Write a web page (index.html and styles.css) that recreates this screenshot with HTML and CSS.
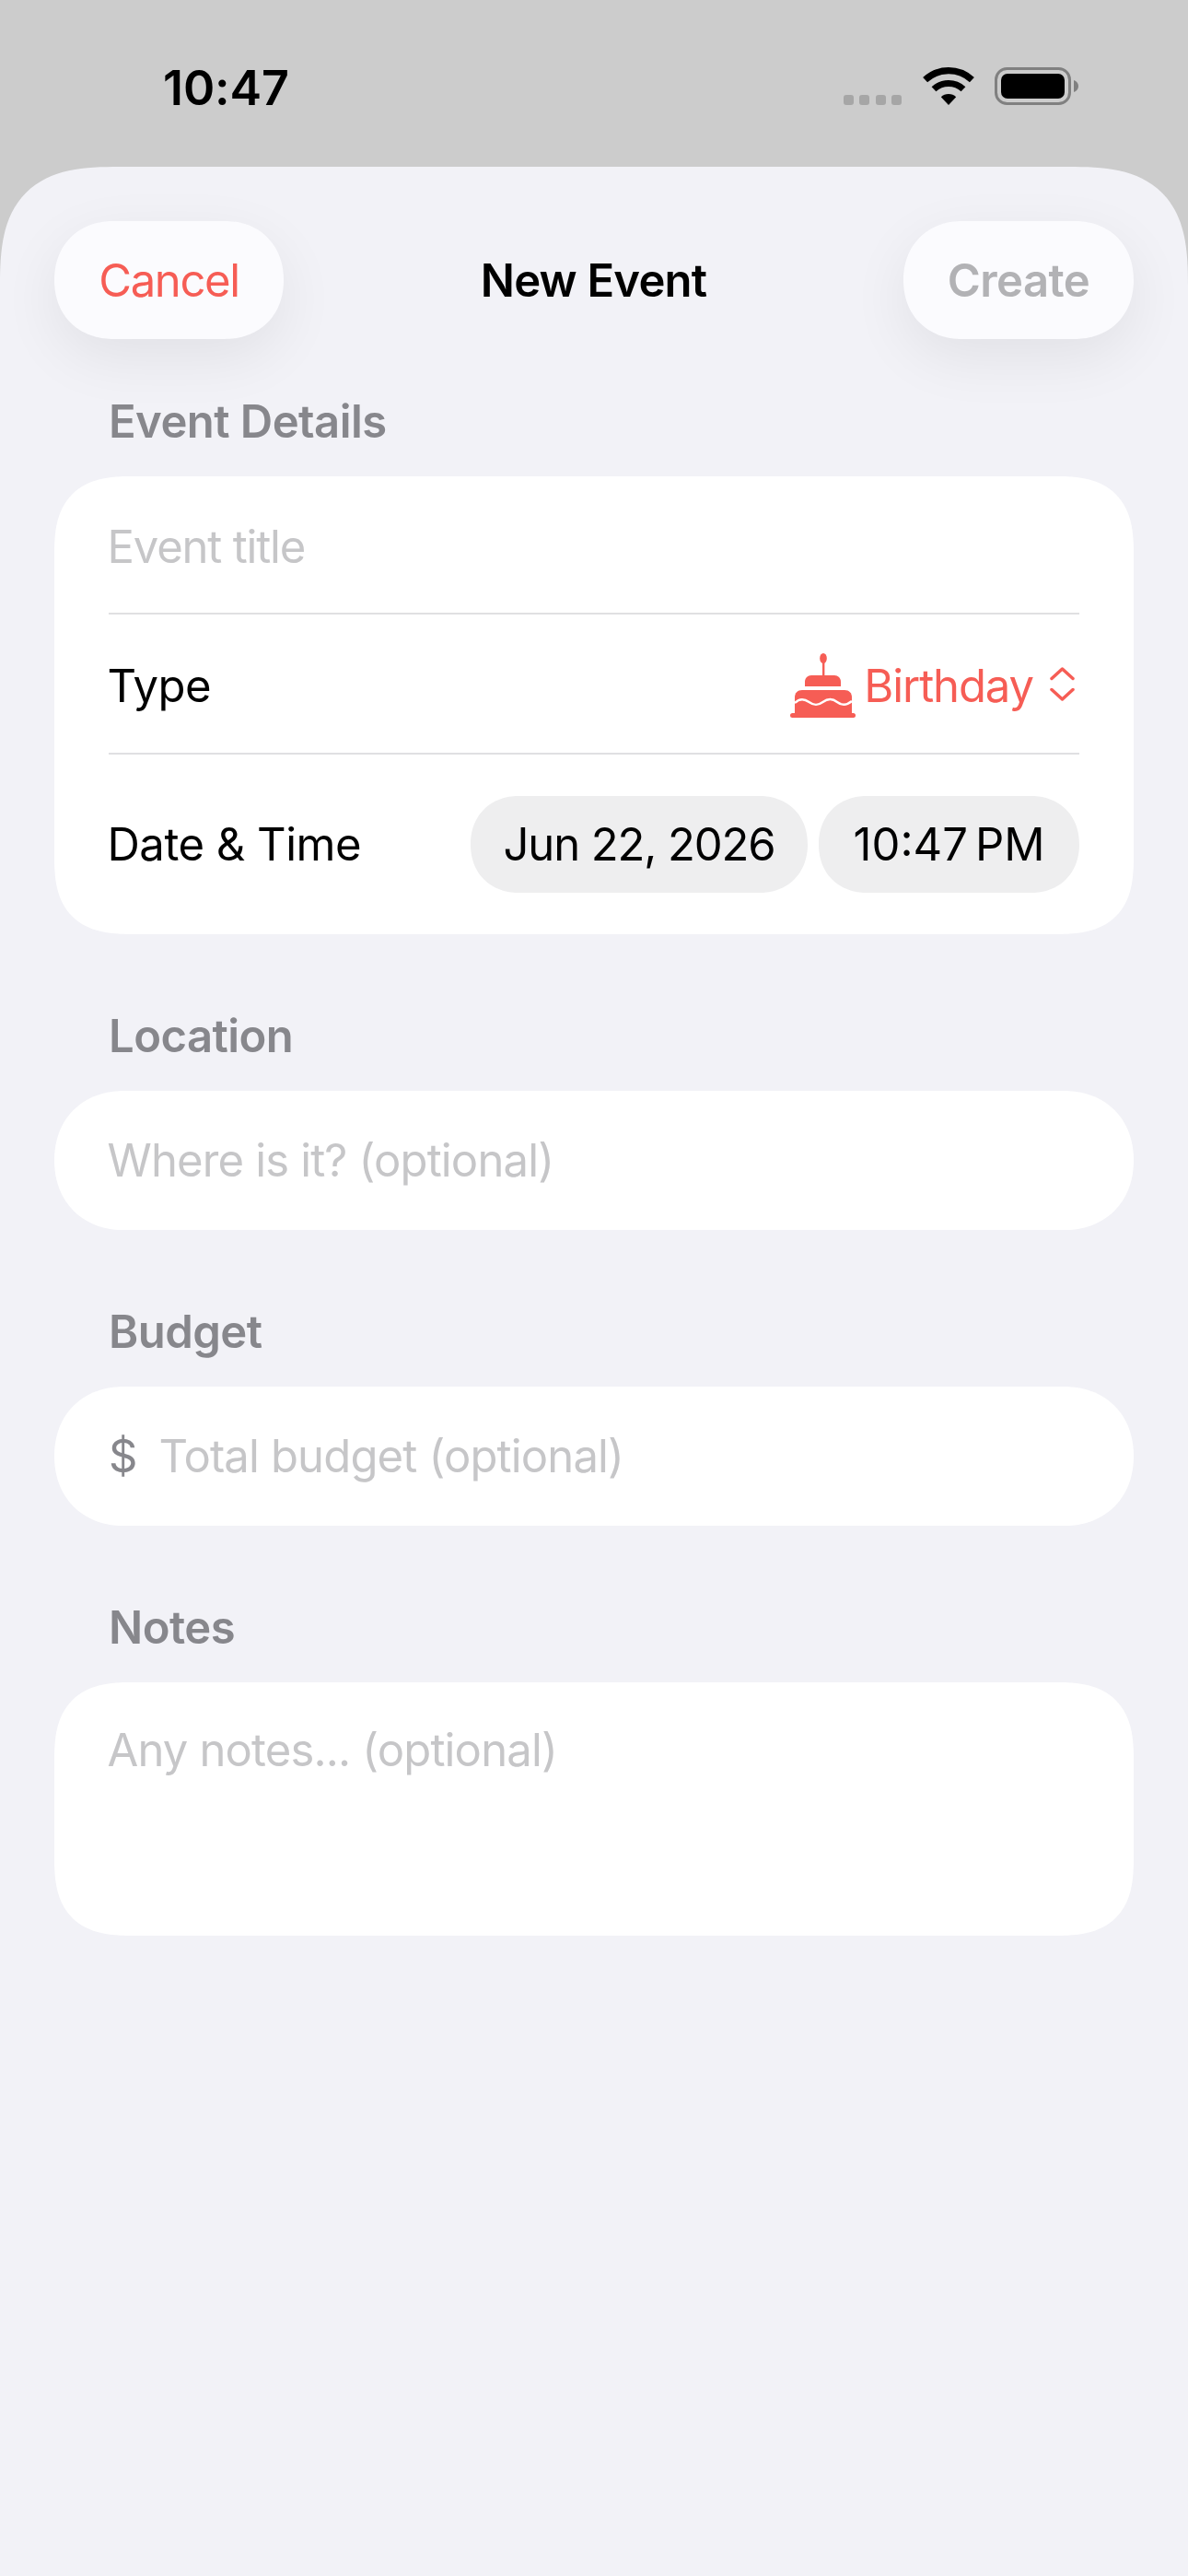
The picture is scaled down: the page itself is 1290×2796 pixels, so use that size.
FILE: index.html
```html
<!DOCTYPE html>
<html lang="en">
<head>
  <meta charset="UTF-8">
  <meta name="viewport" content="width=device-width, initial-scale=1.0">
  <title>New Event</title>
  <link rel="stylesheet" href="styles.css">
</head>
<body>
  <header class="status-bar">
    <span class="clock">10:47</span>
    <div class="status-icons">
      <div class="signal"><i></i><i></i><i></i><i></i></div>
      <svg class="wifi" width="56" height="41" viewBox="0 0 56 41">
        <path d="M2.6 13.7A37.3 37.3 0 0 1 53.4 13.7" fill="none" stroke="#000" stroke-width="7.3"/>
        <path d="M12 23.8A23.5 23.5 0 0 1 44 23.8" fill="none" stroke="#000" stroke-width="7"/>
        <path d="M28 41L19.8 32.2A12 12 0 0 1 36.2 32.2Z" fill="#000"/>
      </svg>
      <svg class="battery" width="91" height="41" viewBox="0 0 91 41">
        <rect x="1.5" y="1.5" width="80" height="38" rx="12" fill="none" stroke="#808080" stroke-width="3"/>
        <rect x="7" y="7" width="69" height="27" rx="7" fill="#000"/>
        <path d="M86 14C89 15 91 17.500 91 20.500C91 23.500 89 26 86 27Z" fill="#808080"/>
      </svg>
    </div>
  </header>

  <main class="sheet">
    <div class="toolbar">
      <button class="pill-button cancel">Cancel</button>
      <h1>New Event</h1>
      <button class="pill-button create">Create</button>
    </div>

    <h2 class="section-label first">Event Details</h2>
    <section class="card details">
      <div class="row row-title"><span class="placeholder">Event title</span></div>
      <div class="row row-type">
        <span class="row-name">Type</span>
        <div class="type-value">
          <svg class="cake" width="71" height="70" viewBox="0 0 71 70">
            <ellipse cx="36" cy="5.500" rx="3.800" ry="5.500" fill="#f65d55"/>
            <rect x="35" y="10" width="2.400" height="16" fill="#f65d55"/>
            <path d="M16 36V31C16 27 19 24 23 24H48C52 24 55 27 55 31V36Z" fill="#f65d55"/>
            <path d="M5 66V48C5 43 8 40 13 40H59C64 40 67 43 67 48V66Z" fill="#f65d55"/>
            <path d="M5 54C10 49 15 49 20.500 53C26 57 30 57 35.500 53C41 49 46 49 51 53C56 57 61 57 67 52" fill="none" stroke="#fff" stroke-width="2.500"/>
            <rect x="0" y="65" width="71" height="5" rx="2.500" fill="#f65d55"/>
          </svg>
          <span>Birthday</span>
          <svg class="chevrons" width="27" height="37" viewBox="0 0 27 37">
            <path d="M2 12.500L13.500 2L25 12.500M2 24.500L13.500 35L25 24.500" fill="none" stroke="#f65d55" stroke-width="3.500" stroke-linecap="round" stroke-linejoin="round"/>
          </svg>
        </div>
      </div>
      <div class="row row-date">
        <span class="row-name">Date &amp; Time</span>
        <div class="date-pills">
          <span class="date-pill date">Jun 22, 2026</span>
          <span class="date-pill time">10:47<b>PM</b></span>
        </div>
      </div>
    </section>

    <h2 class="section-label">Location</h2>
    <section class="card field"><span class="placeholder">Where is it? (optional)</span></section>

    <h2 class="section-label">Budget</h2>
    <section class="card field">
      <span class="currency">$</span>
      <span class="placeholder">Total budget (optional)</span>
    </section>

    <h2 class="section-label">Notes</h2>
    <section class="card notes"><span class="placeholder">Any notes... (optional)</span></section>
  </main>
</body>
</html>
```

FILE: styles.css
```css
* {
  margin: 0;
  padding: 0;
  box-sizing: border-box;
}
html, body {
  height: 100%;
}
body {
  width: 1290px;
  height: 2796px;
  overflow: hidden;
  display: flex;
  flex-direction: column;
  font-family: 'Inter', 'Liberation Sans', sans-serif;
  background-color: #cccccc;
  color: #000;
}

/* Status bar */
.status-bar {
  height: 181px;
  flex-shrink: 0;
  padding: 73px 119px 0 177px;
  display: flex;
  justify-content: space-between;
  align-items: flex-start;
}
.clock {
  font-size: 52px;
  line-height: 41px;
  padding-top: 2px;
  font-weight: 600;
  letter-spacing: -0.1px;
}
.status-icons {
  display: flex;
  align-items: flex-end;
  height: 41px;
}
.signal {
  display: flex;
  gap: 6.5px;
  margin-right: 23px;
}
.signal i {
  width: 11px;
  height: 11px;
  border-radius: 3px;
  background-color: #a6a6a6;
}
.wifi {
  margin-right: 22px;
}

/* Sheet */
.sheet {
  flex: 1;
  padding: 59px 59px 0;
  background-color: #f2f2f7;
  border-radius: 130px 130px 0 0;
  corner-shape: superellipse(1.5);
}
.toolbar {
  height: 128px;
  display: flex;
  justify-content: space-between;
  align-items: center;
}
.toolbar h1 {
  font-size: 49px;
  font-weight: 600;
  letter-spacing: -0.8px;
}
.pill-button {
  width: 249px;
  height: 128px;
  border: none;
  border-radius: 64px;
  corner-shape: superellipse(1.1);
  background-color: #fbfbfe;
  box-shadow: 0 20px 64px rgba(0, 0, 0, 0.07);
  font-family: inherit;
  font-size: 49px;
}
.cancel {
  color: #f65d55;
  letter-spacing: -1.4px;
}
.create {
  width: 250px;
  color: #b2b2b5;
  font-weight: 600;
  letter-spacing: -0.6px;
}

.section-label {
  padding-left: 59px;
  height: 60px;
  line-height: 60px;
  margin: 81px 0 29px;
  font-size: 49px;
  font-weight: 600;
  letter-spacing: -0.55px;
  color: #87878c;
}
.section-label.first {
  margin-top: 60px;
}

/* Cards */
.card {
  background-color: #fff;
  border-radius: 84px;
  corner-shape: superellipse(1.4);
  padding: 0 59px;
  font-size: 49px;
}
.placeholder {
  color: #c6c6c8;
  letter-spacing: -0.85px;
}
.card > .placeholder:first-child,
.row-title .placeholder,
.row-name {
  margin-left: -1.5px;
}
.row {
  display: flex;
  justify-content: space-between;
  align-items: center;
  letter-spacing: -0.5px;
}
.row-title {
  height: 150px;
  padding-top: 4px;
  border-bottom: 2px solid #e0e0e2;
}
.row-title .placeholder {
  letter-spacing: -1.2px;
}
.row-type {
  height: 152px;
  padding-top: 4px;
  border-bottom: 2px solid #e0e0e2;
}
.row-date {
  height: 195px;
}
.type-value {
  display: flex;
  align-items: center;
  color: #f65d55;
  letter-spacing: -1.1px;
}
.cake {
  margin-right: 9px;
}
.chevrons {
  margin: -4px 5px 0 18px;
}
.date-pills {
  display: flex;
  gap: 12px;
}
.date-pill {
  height: 105px;
  display: flex;
  align-items: center;
  justify-content: center;
  background-color: #eeeeef;
  border-radius: 53px;
  corner-shape: superellipse(1.1);
}
.date {
  width: 366px;
  letter-spacing: -1.1px;
}
.time {
  width: 283px;
  letter-spacing: 0;
}
.time b {
  font-weight: 400;
  margin-left: 8px;
}
.field {
  height: 151px;
  display: flex;
  align-items: center;
  corner-shape: superellipse(1.1);
}
.currency {
  color: #87878c;
  margin-right: 23px;
}
.notes {
  height: 275px;
  padding-top: 44px;
  line-height: 60px;
}
```
